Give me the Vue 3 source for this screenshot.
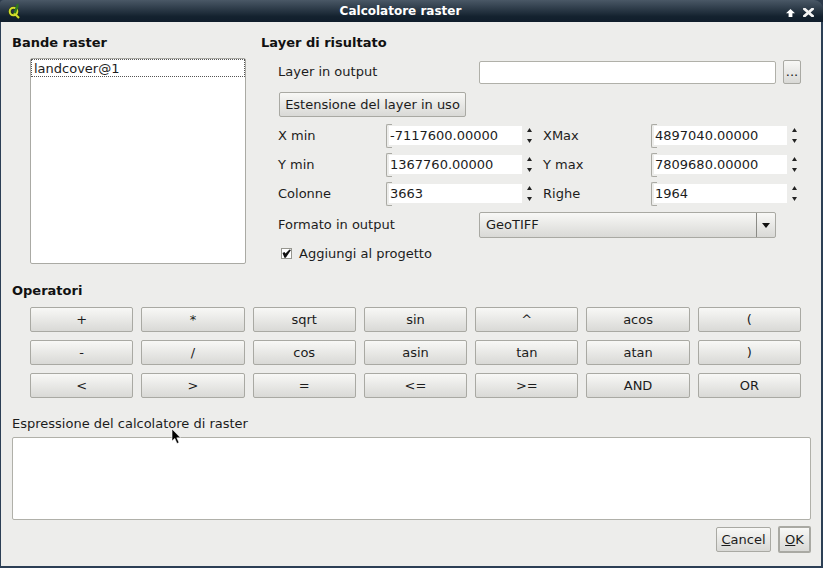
<script setup>
const operators = ['+', '*', 'sqrt', 'sin', '^', 'acos', '(', '-', '/', 'cos', 'asin', 'tan', 'atan', ')', '<', '>', '=', '<=', '>=', 'AND', 'OR'];

const extents = [
    { label: 'X min', value: '-7117600.00000', label2: 'XMax', value2: '4897040.00000' },
    { label: 'Y min', value: '1367760.00000', label2: 'Y max', value2: '7809680.00000' },
    { label: 'Colonne', value: '3663', label2: 'Righe', value2: '1964' },
];
</script>

<template>
    <div class="window">
        <header class="titlebar">
            <svg class="logo" width="16" height="18" viewBox="0 0 16 18">
                <circle cx="5.5" cy="8.5" r="3.8" fill="none" stroke="#27330f" stroke-width="3" />
                <path d="M6 10 L11 15" stroke="#27330f" stroke-width="3.4" />
                <circle cx="5.5" cy="8.5" r="3.8" fill="none" stroke="#d2de2c" stroke-width="2" />
                <path d="M6 10 L11 15" stroke="#d2de2c" stroke-width="2" />
                <path d="M10.5 0.5 L8.5 1.5 L5.5 10 L7.5 10.5 L10.5 4 Z" fill="#2f7a1e" />
            </svg>
            <span class="title">Calcolatore raster</span>
            <div class="win-controls">
                <svg width="9" height="8" viewBox="0 0 9 8">
                    <path d="M4.5 0 L9 4.2 H6.4 V8 H2.6 V4.2 H0 Z" fill="#fff" />
                </svg>
                <svg width="11" height="9" viewBox="0 0 11 9">
                    <path d="M1.5 1 L9.5 8 M9.5 1 L1.5 8" stroke="#f4f4f4" stroke-width="2.8" stroke-linecap="square" />
                </svg>
            </div>
        </header>

        <main class="content">
            <div class="top">
                <section class="bands">
                    <h2>Bande raster</h2>
                    <div class="list">
                        <div class="list-item">landcover@1</div>
                    </div>
                </section>

                <section class="result">
                    <h2>Layer di risultato</h2>
                    <div class="output-row">
                        <span class="label">Layer in output</span>
                        <div class="text-field"></div>
                        <button class="btn dots">...</button>
                    </div>
                    <button class="btn extent">Estensione del layer in uso</button>
                    <div class="extent-grid">
                        <template v-for="row in extents" :key="row.label">
                            <span class="label">{{ row.label }}</span>
                            <div class="spin">
                                <span class="spin-value">{{ row.value }}</span>
                                <svg class="spin-arrows" width="7" height="17" viewBox="0 0 7 17">
                                    <path d="M3.5 1 L6 5 H1 Z M3.5 16 L6 12 H1 Z" fill="#222" />
                                </svg>
                            </div>
                            <span class="label">{{ row.label2 }}</span>
                            <div class="spin">
                                <span class="spin-value">{{ row.value2 }}</span>
                                <svg class="spin-arrows" width="7" height="17" viewBox="0 0 7 17">
                                    <path d="M3.5 1 L6 5 H1 Z M3.5 16 L6 12 H1 Z" fill="#222" />
                                </svg>
                            </div>
                        </template>
                    </div>
                    <div class="format-row">
                        <span class="label">Formato in output</span>
                        <div class="combo">
                            <span class="combo-value">GeoTIFF</span>
                            <span class="combo-arrow"></span>
                        </div>
                    </div>
                    <label class="check-row">
                        <span class="checkbox">
                            <svg width="9" height="9" viewBox="0 0 9 9">
                                <path d="M0.5 4 L2.5 3 L3.5 4.5 L7.5 0.5 L9 1 L3.8 8.8 H2.4 Z" fill="#111" />
                            </svg>
                        </span>
                        Aggiungi al progetto
                    </label>
                </section>
            </div>

            <section class="operators">
                <h2>Operatori</h2>
                <div class="op-grid">
                    <button v-for="op in operators" :key="op" class="btn">{{ op }}</button>
                </div>
            </section>

            <section class="expression">
                <div class="expr-label">Espressione del calcolatore di raster</div>
                <div class="expr-box"></div>
            </section>

            <footer class="actions">
                <button class="btn cancel"><u>C</u>ancel</button>
                <button class="btn ok"><u>O</u>K</button>
            </footer>
        </main>

        <svg class="cursor" width="12" height="17" viewBox="0 0 12 17">
            <path d="M1 1 V13 L3.8 10.4 L6 15.5 L8 14.6 L5.8 9.8 H9.5 Z" fill="#000" stroke="#fff" stroke-width="0.6" />
        </svg>
    </div>
</template>

<style>
html,
body {
    margin: 0;
    background: #2c3a4a;
}
</style>

<style scoped>
.window {
    position: relative;
    box-sizing: border-box;
    width: 823px;
    height: 568px;
    padding: 0 2px 2px 1px;
    background: #2c3f55;
    border-radius: 4px 9px 0 0;
    font-family: "DejaVu Sans", sans-serif;
    font-size: 13px;
    color: #1c1c1c;
    overflow: hidden;
}

.titlebar {
    position: relative;
    display: flex;
    align-items: center;
    justify-content: center;
    box-sizing: border-box;
    height: 22px;
    margin: 0 -2px 0 -1px;
    padding-right: 22px;
    background: linear-gradient(#4a5866, #14222f 75%, #101d2b);
}

.logo {
    position: absolute;
    left: 8px;
    top: 3px;
}

.title {
    color: #fff;
    font-size: 12px;
    font-weight: 700;
}

.win-controls {
    position: absolute;
    right: 9px;
    top: 8px;
    display: flex;
    align-items: center;
    gap: 8px;
}

.content {
    box-sizing: border-box;
    height: 544px;
    padding: 13px 10px 0 11px;
    background: #ededeb;
}

h2 {
    margin: 0;
    font-size: 13px;
    font-weight: 700;
    line-height: 16px;
    color: #111;
}

.top {
    display: flex;
    gap: 15px;
}

.bands {
    width: 234px;
    flex: none;
}

.list {
    box-sizing: border-box;
    height: 206px;
    margin: 7px 0 0 18px;
    background: #fff;
    border: 1px solid #aaaaa4;
    border-radius: 2px;
}

.list-item {
    box-sizing: border-box;
    height: 18px;
    padding: 1px 0 0 2px;
    line-height: 16px;
    border: 1px dotted #555;
}

.result {
    flex: 1;
}

.label {
    line-height: 16px;
    white-space: nowrap;
}

.btn {
    box-sizing: border-box;
    height: 25px;
    padding: 0;
    font: inherit;
    color: #1c1c1c;
    background: linear-gradient(#f8f8f6, #d9d9d6);
    border: 1px solid #a9a9a3;
    border-radius: 2px;
}

.output-row {
    display: flex;
    align-items: center;
    margin: 9px 0 0 17px;
}

.output-row .label {
    width: 201px;
}

.text-field {
    box-sizing: border-box;
    width: 297px;
    height: 23px;
    background: #fff;
    border: 1px solid #b0b0a9;
    border-radius: 2px;
}

.dots {
    width: 18px;
    height: 24px;
    margin-left: 7px;
    line-height: 16px;
}

.extent {
    display: block;
    width: 187px;
    margin: 8px 0 0 18px;
}

.extent-grid {
    display: grid;
    grid-template-columns: 108px 157px 108px 150px;
    grid-auto-rows: 23px;
    row-gap: 6px;
    align-items: center;
    margin: 7px 0 0 17px;
}

.spin {
    position: relative;
    display: flex;
    align-items: center;
    box-sizing: border-box;
    width: 150px;
    height: 23px;
    padding-left: 3px;
}

.spin::before {
    content: "";
    position: absolute;
    left: 0;
    top: 0;
    box-sizing: border-box;
    width: 6px;
    height: 24px;
    border: 1px solid #aaaaa4;
    border-right: 0;
    border-radius: 2px 0 0 2px;
}

.spin-value {
    position: relative;
    flex: 1;
    height: 19px;
    padding-left: 1px;
    line-height: 19px;
    background: #fff;
}

.spin-arrows {
    flex: none;
    margin: 0 3px 0 4px;
}

.format-row {
    display: flex;
    align-items: center;
    margin: 7px 0 0 17px;
}

.format-row .label {
    width: 201px;
}

.combo {
    box-sizing: border-box;
    display: flex;
    align-items: center;
    width: 297px;
    height: 26px;
    background: linear-gradient(#f8f8f6, #d9d9d6);
    border: 1px solid #a9a9a3;
    border-radius: 2px;
}

.combo-value {
    flex: 1;
    padding: 0 0 2px 6px;
}

.combo-arrow {
    position: relative;
    width: 18px;
    height: 24px;
    border-left: 1px solid #8a8a85;
}

.combo-arrow::after {
    content: "";
    position: absolute;
    left: 5px;
    top: 10px;
    border-style: solid;
    border-width: 5px 4.5px 0;
    border-color: #111 transparent transparent;
}

.check-row {
    display: flex;
    align-items: center;
    gap: 7px;
    height: 16px;
    margin: 7px 0 0 20px;
}

.checkbox {
    box-sizing: border-box;
    display: flex;
    align-items: center;
    justify-content: center;
    width: 11px;
    height: 11px;
    background: #fff;
    border: 1px solid #96968f;
}

.operators {
    margin-top: 19px;
}

.op-grid {
    display: grid;
    grid-template-columns: repeat(7, 1fr);
    grid-auto-rows: 25px;
    gap: 8px;
    margin: 8px 0 0 18px;
    width: 771px;
}

.expression {
    margin-top: 18px;
}

.expr-label {
    line-height: 16px;
}

.expr-box {
    box-sizing: border-box;
    height: 83px;
    margin-top: 5px;
    background: #fff;
    border: 1px solid #b0b0a9;
    border-radius: 2px;
}

.actions {
    display: flex;
    justify-content: flex-end;
    align-items: center;
    gap: 7px;
    margin-top: 6px;
}

.cancel {
    width: 55px;
}

.ok {
    width: 33px;
    height: 27px;
    border: 2px solid #a9a9a3;
}

.cursor {
    position: absolute;
    left: 171px;
    top: 428px;
}
</style>
